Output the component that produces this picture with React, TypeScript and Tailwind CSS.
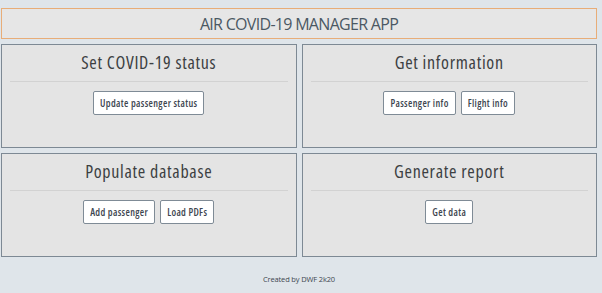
import React from 'react';

type Section = {
  title: string;
  actions: string[];
};

const sections: Section[] = [
  { title: 'Set COVID-19 status', actions: ['Update passenger status'] },
  { title: 'Get information', actions: ['Passenger info', 'Flight info'] },
  { title: 'Populate database', actions: ['Add passenger', 'Load PDFs'] },
  { title: 'Generate report', actions: ['Get data'] },
];

const Panel: React.FC<{ section: Section }> = ({ section }) => (
  <div className="h-[104px] border border-[#7d8994] bg-[#e4e4e4] px-[8px] pt-[5px]">
    <h2 className="text-center text-[18px] leading-[24px] tracking-[0.7px] text-[#3c3f42] font-stretch-condensed">
      {section.title}
    </h2>
    <hr className="mt-[7px] border-t border-[#d2d2d2]" />
    <div className="mt-[9px] flex justify-center gap-[5px]">
      {section.actions.map((a) => (
        <button
          key={a}
          className="h-[24px] rounded-[2px] border border-[#7f8b96] bg-white px-[6px] text-[10px] font-semibold tracking-[0.35px] text-[#3e4650] font-stretch-condensed"
        >
          {a}
        </button>
      ))}
    </div>
  </div>
);

const App: React.FC = () => {
  return (
    <div
      className="min-h-screen bg-[#dfe5ea] pt-[8px] pl-[1px] pr-[5px]"
      style={{ fontFamily: '"Open Sans", "Noto Sans", sans-serif' }}
    >
      <header className="flex h-[31px] items-center justify-center border border-[#e8ad78] bg-[#e6e6e6]">
        <span className="text-[16px] tracking-[-0.7px] text-[#4b5863]">AIR COVID-19 MANAGER APP</span>
      </header>
      <main className="mt-[5px] grid grid-cols-2 gap-x-[5px] gap-y-[5px]">
        {sections.map((s) => (
          <Panel key={s.title} section={s} />
        ))}
      </main>
      <footer className="mt-[17px] text-center text-[7.5px] tracking-[-0.15px] text-[#3e4650]">
        Created by DWF 2k20
      </footer>
    </div>
  );
};

export default App;
